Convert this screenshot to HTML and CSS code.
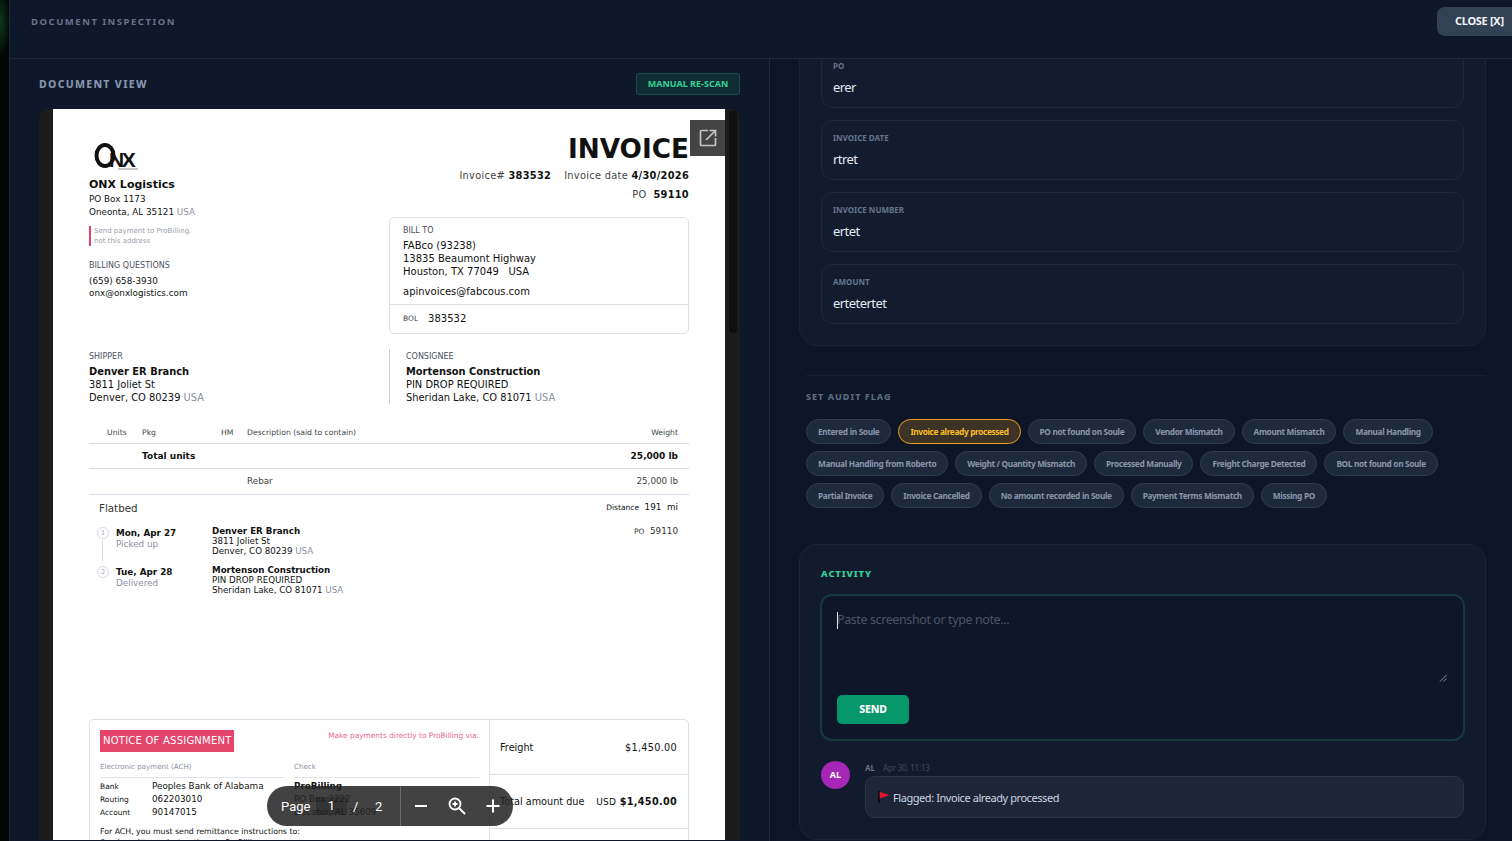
FILE: index.html
```html
<!DOCTYPE html>
<html lang="en">
<head>
<meta charset="utf-8">
<title>Document Inspection</title>
<link rel="stylesheet" href="styles.css">
</head>
<body>
<div class="strip"></div>
<div class="modal">
  <header class="modal-head">
    <span class="modal-title">DOCUMENT INSPECTION</span>
    <button class="close-btn">CLOSE [X]</button>
  </header>
  <div class="modal-body">
    <section class="left">
      <div class="left-head">
        <h2 class="view-title">DOCUMENT VIEW</h2>
        <button class="rescan">MANUAL RE-SCAN</button>
      </div>
      <div class="viewer">
        <div class="page">
          <div class="top">
            <div class="top-left">
              <svg class="logo" width="46" height="30" viewBox="0 0 46 30">
                <ellipse cx="11" cy="13.500" rx="8.500" ry="10.500" fill="none" stroke="#111" stroke-width="4"/>
                <text x="15" y="25" class="logo-text">NX</text>
                <path d="M24 27h20" stroke="#777" stroke-width=".8"/>
              </svg>
              <div class="co-name">ONX Logistics</div>
              <div class="addr">PO Box 1173</div>
              <div class="addr">Oneonta, AL 35121 <span class="muted">USA</span></div>
              <div class="note">Send payment to ProBilling,<br>not this address</div>
              <div class="small-label bq">BILLING QUESTIONS</div>
              <div class="contact">(659) 658-3930</div>
              <div class="contact">onx@onxlogistics.com</div>
            </div>
            <div class="top-right">
              <div class="inv-title">INVOICE</div>
              <div class="meta"><span>Invoice# <b>383532</b></span><span>Invoice date <b>4/30/2026</b></span></div>
              <div class="meta meta-po"><span>PO&nbsp; <b>59110</b></span></div>
              <div class="bill">
                <div class="bill-main">
                  <div class="small-label">BILL TO</div>
                  <div class="bill-lines">FABco (93238)<br>13835 Beaumont Highway<br>Houston, TX 77049 &nbsp; USA</div>
                  <div class="bill-mail">apinvoices@fabcous.com</div>
                </div>
                <div class="bill-bol"><span class="bol-label">BOL</span><span>383532</span></div>
              </div>
            </div>
          </div>
          <div class="parties">
            <div class="party">
              <div class="small-label">SHIPPER</div>
              <div class="party-name">Denver ER Branch</div>
              <div class="party-line">3811 Joliet St</div>
              <div class="party-line">Denver, CO 80239 <span class="muted">USA</span></div>
            </div>
            <div class="party party-b">
              <div class="small-label">CONSIGNEE</div>
              <div class="party-name">Mortenson Construction</div>
              <div class="party-line">PIN DROP REQUIRED</div>
              <div class="party-line">Sheridan Lake, CO 81071 <span class="muted">USA</span></div>
            </div>
          </div>
          <div class="row row-head"><span>Units</span><span>Pkg</span><span>HM</span><span>Description (said to contain)</span><span class="r">Weight</span></div>
          <div class="row row-total"><span></span><b class="span3">Total units</b><b class="r">25,000 lb</b></div>
          <div class="row row-item"><span></span><span></span><span></span><span>Rebar</span><span class="r">25,000 lb</span></div>
          <div class="equip">
            <span class="flatbed">Flatbed</span>
            <span class="dist"><small>Distance</small>&nbsp; 191 &nbsp;mi</span>
          </div>
          <div class="stops">
            <div class="stop">
              <div class="stop-num">1</div>
              <div class="stop-date"><b>Mon, Apr 27</b><span>Picked up</span></div>
              <div class="stop-addr"><b>Denver ER Branch</b><br>3811 Joliet St<br>Denver, CO 80239 <span class="muted">USA</span></div>
              <div class="stop-po"><small>PO</small>&nbsp; 59110</div>
            </div>
            <div class="stop stop-2">
              <div class="stop-num">2</div>
              <div class="stop-date"><b>Tue, Apr 28</b><span>Delivered</span></div>
              <div class="stop-addr"><b>Mortenson Construction</b><br>PIN DROP REQUIRED<br>Sheridan Lake, CO 81071 <span class="muted">USA</span></div>
            </div>
          </div>
          <div class="notice">
            <div class="notice-main">
              <div class="notice-top">
                <span class="notice-badge">NOTICE OF ASSIGNMENT</span>
                <span class="notice-via">Make payments directly to ProBilling via:</span>
              </div>
              <div class="pay">
                <div class="pay-col">
                  <div class="pay-head">Electronic payment (ACH)</div>
                  <div class="pay-row"><small>Bank</small><span>Peoples Bank of Alabama</span></div>
                  <div class="pay-row"><small>Routing</small><span>062203010</span></div>
                  <div class="pay-row"><small>Account</small><span>90147015</span></div>
                </div>
                <div class="pay-col">
                  <div class="pay-head">Check</div>
                  <div class="pay-line"><b>ProBilling</b></div>
                  <div class="pay-line">PO Box 2222</div>
                  <div class="pay-line">Decatur, AL 35609</div>
                </div>
              </div>
              <div class="ach">For ACH, you must send remittance instructions to:<br>Send remittance instructions to ProBilling</div>
            </div>
            <div class="totals">
              <div class="tot tot-1"><span>Freight</span><span class="amt">$1,450.00</span></div>
              <div class="tot tot-2"><span>Total amount due</span><span class="amt"><small>USD</small> <b>$1,450.00</b></span></div>
            </div>
          </div>
        </div>
        <div class="scrollbar"><div class="thumb"></div></div>
        <button class="open-ext" aria-label="Open in new window">
          <svg width="20" height="20" viewBox="0 0 20 20" fill="none" stroke="#c4c4c4" stroke-width="1.700"><path d="M10 2.500H3.500a1 1 0 0 0-1 1v13a1 1 0 0 0 1 1h13a1 1 0 0 0 1-1V10"/><path d="M8 12 17.500 2.500M11.500 2.500h6v6"/></svg>
        </button>
        <div class="pdf-bar">
          <span class="pb-page">Page</span>
          <span class="pb-input">1</span>
          <span class="pb-slash">/</span>
          <span class="pb-total">2</span>
          <span class="pb-div"></span>
          <svg class="pb-ic" width="16" height="16" viewBox="0 0 16 16" stroke="#fff" stroke-width="2" fill="none"><path d="M2 8h12"/></svg>
          <svg class="pb-ic" width="20" height="20" viewBox="0 0 20 20" stroke="#fff" stroke-width="1.800" fill="none"><circle cx="8" cy="8" r="5.500"/><path d="M12 12l6 6M5.500 8h5M8 5.500v5"/></svg>
          <svg class="pb-ic" width="16" height="16" viewBox="0 0 16 16" stroke="#fff" stroke-width="2" fill="none"><path d="M1.500 8h13M8 1.500v13"/></svg>
        </div>
      </div>
    </section>
    <section class="right">
      <div class="right-inner">
        <div class="fields">
          <div class="field"><div class="field-label">PO</div><div class="field-value">erer</div></div>
          <div class="field"><div class="field-label">INVOICE DATE</div><div class="field-value">rtret</div></div>
          <div class="field"><div class="field-label">INVOICE NUMBER</div><div class="field-value">ertet</div></div>
          <div class="field"><div class="field-label">AMOUNT</div><div class="field-value">ertetertet</div></div>
        </div>
        <div class="audit">
          <h3 class="audit-title">SET AUDIT FLAG</h3>
          <div class="chips">
            <span class="chip">Entered in Soule</span>
            <span class="chip chip-on">Invoice already processed</span>
            <span class="chip">PO not found on Soule</span>
            <span class="chip">Vendor Mismatch</span>
            <span class="chip">Amount Mismatch</span>
            <span class="chip">Manual Handling</span>
            <span class="chip">Manual Handling from Roberto</span>
            <span class="chip">Weight / Quantity Mismatch</span>
            <span class="chip">Processed Manually</span>
            <span class="chip">Freight Charge Detected</span>
            <span class="chip">BOL not found on Soule</span>
            <span class="chip">Partial Invoice</span>
            <span class="chip">Invoice Cancelled</span>
            <span class="chip">No amount recorded in Soule</span>
            <span class="chip">Payment Terms Mismatch</span>
            <span class="chip">Missing PO</span>
          </div>
        </div>
        <div class="activity">
          <h3 class="activity-title">ACTIVITY</h3>
          <div class="composer">
            <div class="input-row">
              <span class="caret"></span>
              <span class="placeholder">Paste screenshot or type note...</span>
              <svg class="resize" width="8" height="8" viewBox="0 0 8 8" stroke="#8a8f98" fill="none"><path d="M7.500 1 1 7.500M7.500 4.500 4.500 7.500"/></svg>
            </div>
            <button class="send">SEND</button>
          </div>
          <div class="msg">
            <div class="avatar">AL</div>
            <div class="msg-body">
              <div class="msg-meta"><b>AL</b><span>Apr 30, 11:13</span></div>
              <div class="bubble">
                <svg width="12" height="12" viewBox="0 0 12 12"><path d="M1 0v12" stroke="#000" stroke-width="1.400"/><path d="M1.700 .8 11.500 4.200 1.700 7.500z" fill="#e0162b"/></svg>
                <span>Flagged: Invoice already processed</span>
              </div>
            </div>
          </div>
        </div>
      </div>
    </section>
  </div>
</div>
</body>
</html>
```
FILE: styles.css
```css
* { box-sizing: border-box; }
html, body { margin: 0; height: 100%; overflow: hidden; }
body { display: flex; background: #000; font-family: "Noto Sans", sans-serif; color: #e2e8f0; }
button { font-family: inherit; border: 0; padding: 0; }
h2, h3 { margin: 0; }

.strip { width: 9px; flex: none; background: radial-gradient(ellipse 12px 40px at 0 22px, #0d3b1e, #020504 90%); }
.modal { flex: 1; min-width: 0; height: 841px; display: flex; flex-direction: column; background: #0f172a; border-left: 1px solid #1e293b; }

.modal-head { height: 59px; flex: none; display: flex; justify-content: space-between; align-items: flex-start; padding: 7px 0 0 21px; border-bottom: 1px solid #1e293b; }
.modal-title { margin-top: 8px; font-size: 9.500px; font-weight: 700; letter-spacing: 1.520px; color: #64748b; line-height: 13px; }
.close-btn { width: 75px; height: 29px; border-radius: 8px 0 0 8px; background: #334155; color: #f1f5f9; font-size: 11px; font-weight: 700; letter-spacing: -.3px; text-align: left; padding: 0 0 2px 18px; }

.modal-body { flex: 1; min-height: 0; display: flex; }

.left { width: 760px; flex: none; padding: 14px 29px 1px; border-right: 1px solid #1e293b; display: flex; flex-direction: column; }
.left-head { height: 22px; display: flex; justify-content: space-between; align-items: center; margin-bottom: 14px; flex: none; }
.view-title { font-size: 10.500px; font-weight: 800; letter-spacing: 1.300px; color: #8394ac; }
.rescan { width: 104px; height: 22px; padding-bottom: 2px; border-radius: 3px; border: 1px solid #134e4a; background: #0f2c33; color: #34d399; font-size: 9px; font-weight: 700; letter-spacing: 0; }

.viewer { position: relative; flex: 1; min-height: 0; overflow: hidden; background: #1c1c1c; border-radius: 10px 10px 0 0; padding-left: 14px; }
.page { width: 672px; height: 900px; background: #fff; padding: 33px 36px 0; color: #111; font-family: "DejaVu Sans", sans-serif; font-size: 8.800px; line-height: 13px; }
.muted { color: #8b90a0; }
.small-label { font-size: 8px; line-height: 11px; color: #4b5060; }

.top { display: flex; justify-content: space-between; height: 191px; }
.top-left { width: 300px; }
.logo { display: block; margin-left: 5px; }
.logo-text { font-family: "Liberation Sans", sans-serif; font-weight: 700; font-size: 21px; letter-spacing: -2.500px; fill: #111; }
.co-name { margin-top: 6px; margin-bottom: 1px; font-size: 11px; font-weight: 700; line-height: 14px; }
.addr { line-height: 13px; }
.note { margin-top: 7px; padding-left: 3px; border-left: 2px solid #e5446a; color: #9a9fab; font-size: 7px; line-height: 10px; }
.bq { margin-top: 14px; margin-bottom: 4px; }
.contact { line-height: 12px; }

.top-right { width: 300px; }
.inv-title { margin-top: -11px; font-size: 26.300px; line-height: 36px; font-weight: 700; text-align: right; }
.meta { display: flex; justify-content: flex-end; gap: 13px; font-size: 9.800px; line-height: 13px; letter-spacing: .3px; color: #444; margin-top: 2px; }
.meta b { color: #111; }
.meta-po { margin-top: 6px; }
.bill { margin-top: 16px; height: 117px; border: 1px solid #dfe1e8; border-radius: 5px; }
.bill-main { height: 87px; padding: 7px 13px 0; border-bottom: 1px solid #dfe1e8; }
.bill-lines { margin-top: 3px; font-size: 10px; }
.bill-mail { margin-top: 7px; font-size: 10px; }
.bill-bol { display: flex; align-items: center; gap: 10px; padding: 7px 13px 0; font-size: 10px; }
.bol-label { font-size: 7.500px; color: #444; }

.parties { display: flex; height: 55px; margin-top: 16px; }
.party { width: 300px; }
.party-b { padding-left: 16px; border-left: 1px solid #d0d2d8; }
.party .small-label { margin-top: 2px; }
.party-name { margin-top: 3px; font-size: 9.900px; font-weight: 700; line-height: 13px; }
.party-line { font-size: 9.900px; line-height: 13px; }

.row { display: grid; grid-template-columns: 35px 79px 26px 1fr auto; align-items: center; padding: 0 11px 0 18px; border-bottom: 1px solid #d9dbe6; }
.row-head { margin-top: 15px; height: 25px; font-size: 7.700px; color: #444; padding-top: 2px; }
.row-total { height: 25px; font-size: 9px; }
.row-total .span3 { grid-column: 2 / 5; }
.row-item { height: 26px; color: #444; }
.r { text-align: right; grid-column: 5; }

.equip { display: flex; justify-content: space-between; padding: 7px 11px 0 10px; height: 27px; font-size: 8.800px; align-items: flex-start; }
.flatbed { font-size: 10.300px; color: #333; }
.dist { margin-top: -1px; }
.dist small, .stop-po small { font-size: 7.500px; }
.stops { padding-left: 8px; padding-right: 11px; position: relative; height: 197px; }
.stop { position: relative; display: grid; grid-template-columns: 19px 96px 1fr auto; height: 39px; line-height: 10px; }
.stop-num { width: 12px; height: 12px; margin-top: 5px; border: 1px solid #d9dbe6; border-radius: 50%; color: #a0a4b0; font-size: 6.500px; line-height: 10px; text-align: center; }
.stop:first-child::after { content: ""; position: absolute; left: 5px; top: 18px; width: 1px; height: 22px; background: #d9dbe6; }
.stop-date { padding-top: 6px; }
.stop-date b { display: block; font-size: 8.800px; line-height: 11px; }
.stop-date span { color: #8b90a0; font-size: 8.800px; line-height: 10px; display: block; }
.stop-addr { font-size: 8.700px; line-height: 9.800px; padding-top: 5px; }
.stop-po { padding-top: 4px; color: #333; }

.notice { display: flex; height: 200px; border: 1px solid #dfe1e8; border-radius: 5px 5px 0 0; }
.notice-main { width: 400px; padding: 9px 10px 0; border-right: 1px solid #dfe1e8; }
.notice-top { display: flex; justify-content: space-between; align-items: flex-start; height: 24px; }
.notice-badge { width: 134px; height: 22px; margin-top: 1px; padding-left: 3px; background: #e5446a; color: #fff; font-size: 10px; letter-spacing: .23px; line-height: 22px; white-space: nowrap; }
.notice-via { color: #e8678a; font-size: 7.400px; line-height: 10px; margin-top: 2px; }
.pay { display: grid; grid-template-columns: 185px 185px; gap: 9px; margin-top: 9px; }
.pay-head { color: #8b90a0; font-size: 7.100px; line-height: 10px; padding-bottom: 5px; border-bottom: 1px solid #e3e5ec; margin-bottom: 2px; }
.pay-row { display: grid; grid-template-columns: 52px 1fr; line-height: 13px; }
.pay-row small { font-size: 7.500px; }
.pay-line { line-height: 13px; }
.ach { margin-top: 7px; font-size: 7.800px; line-height: 11px; }
.totals { flex: 1; font-size: 9.700px; }
.tot { display: flex; justify-content: space-between; align-items: center; padding: 0 11px 0 10px; border-bottom: 1px solid #dfe1e8; }
.tot-1 { height: 55px; }
.tot-2 { height: 54px; }
.tot-2 small { font-size: 9px; }
.amt { letter-spacing: .3px; }

.scrollbar { position: absolute; top: 2px; bottom: 0; right: 3px; width: 8px; }
.thumb { height: 222px; border-radius: 4px; background: #0f0f0f; }
.open-ext { position: absolute; top: 11px; left: 651px; width: 35px; height: 36px; background: #444; display: flex; align-items: center; justify-content: center; }
.pdf-bar { position: absolute; left: 228px; top: 677px; width: 246px; height: 40px; border-radius: 20px; background: rgba(35,35,35,.86); display: flex; align-items: center; color: #fff; font-family: "Roboto", sans-serif; font-size: 13px; }
.pb-page { margin-left: 14px; width: 35px; }
.pb-input { width: 31px; height: 18px; line-height: 18px; text-align: center; background: rgba(0,0,0,.2); }
.pb-slash { margin-left: 6px; width: 10px; }
.pb-total { margin-left: 12px; width: 9px; }
.pb-div { width: 1px; height: 40px; margin-left: 16px; background: #6a6a6a; }
.pb-ic { flex: none; }
.pb-ic:nth-of-type(1) { margin-left: 12px; }
.pb-ic:nth-of-type(2) { margin-left: 18px; }
.pb-ic:nth-of-type(3) { margin-left: 18px; }

.right { flex: 1; min-width: 0; overflow: hidden; background: #0d1527; padding: 0 26px 0 29px; }
.right-inner { margin-top: -33px; }
.fields { padding: 21px 21px 0; background: #121b2e; border: 1px solid #1a2436; border-radius: 18px; display: flex; flex-direction: column; gap: 12px; height: 320px; }
.field { height: 60px; flex: none; padding: 11px 11px 0; background: #131c2f; border: 1px solid #1e293b; border-radius: 12px; }
.field-label { font-size: 8px; font-weight: 700; color: #64748b; line-height: 11px; }
.field-value { margin-top: 8px; font-size: 13px; line-height: 17px; color: #e2e8f0; letter-spacing: -.55px; }

.audit { margin-top: 29px; margin-left: 7px; padding-top: 14px; border-top: 1px solid #172033; height: 169px; }
.audit-title { font-size: 9px; font-weight: 800; letter-spacing: 1px; color: #5a6a80; line-height: 13px; }
.chips { margin-top: 16px; display: flex; flex-wrap: wrap; gap: 7px 7px; }
.chip { height: 25px; padding: 0 11px; border: 1px solid #2f3c50; border-radius: 13px; background: #1e293b; color: #8a97ab; font-size: 8.300px; font-weight: 700; line-height: 23px; letter-spacing: -.37px; word-spacing: .1px; }
.chip-on { background: #3d3226; border-color: #e8a020; color: #fbbf24; }

.activity { height: 296px; padding: 22px 21px 0; background: #121b2e; border: 1px solid #152a35; border-radius: 18px; }
.activity-title { font-size: 9.500px; font-weight: 800; letter-spacing: .85px; color: #34d399; line-height: 13px; }
.composer { margin: 14px -1px 0; height: 147px; padding: 14px 16px 0 15px; background: #0e1628; border: 2px solid #163a3c; border-radius: 12px; }
.input-row { position: relative; height: 85px; display: flex; align-items: flex-start; }
.caret { width: 1px; height: 17px; margin-top: 2px; background: #e2e8f0; }
.placeholder { margin-left: -1px; font-size: 12.500px; line-height: 19px; letter-spacing: -.4px; color: #4a5568; }
.resize { position: absolute; right: 0; bottom: 13px; }
.send { display: block; width: 72px; height: 29px; padding-bottom: 2px; border-radius: 5px; background: #059669; color: #fff; font-size: 10.500px; font-weight: 800; letter-spacing: -.2px; }

.msg { display: flex; gap: 15px; margin-top: 20px; }
.avatar { width: 29px; height: 28px; border-radius: 50%; background: #a626b8; color: #fff; font-size: 9px; font-weight: 700; line-height: 28px; text-align: center; flex: none; }
.msg-body { flex: 1; min-width: 0; margin-top: -2px; }
.msg-meta { display: flex; gap: 8px; height: 17px; padding-bottom: 1px; align-items: center; font-size: 8px; color: #64748b; }
.msg-meta span { color: #3d4758; letter-spacing: -.2px; }
.bubble { height: 42px; padding: 0 12px; display: flex; align-items: center; gap: 3px; background: #1e2537; border: 1px solid #2b3445; border-radius: 10px; font-size: 11px; letter-spacing: -.43px; color: #cbd5e1; }
```
